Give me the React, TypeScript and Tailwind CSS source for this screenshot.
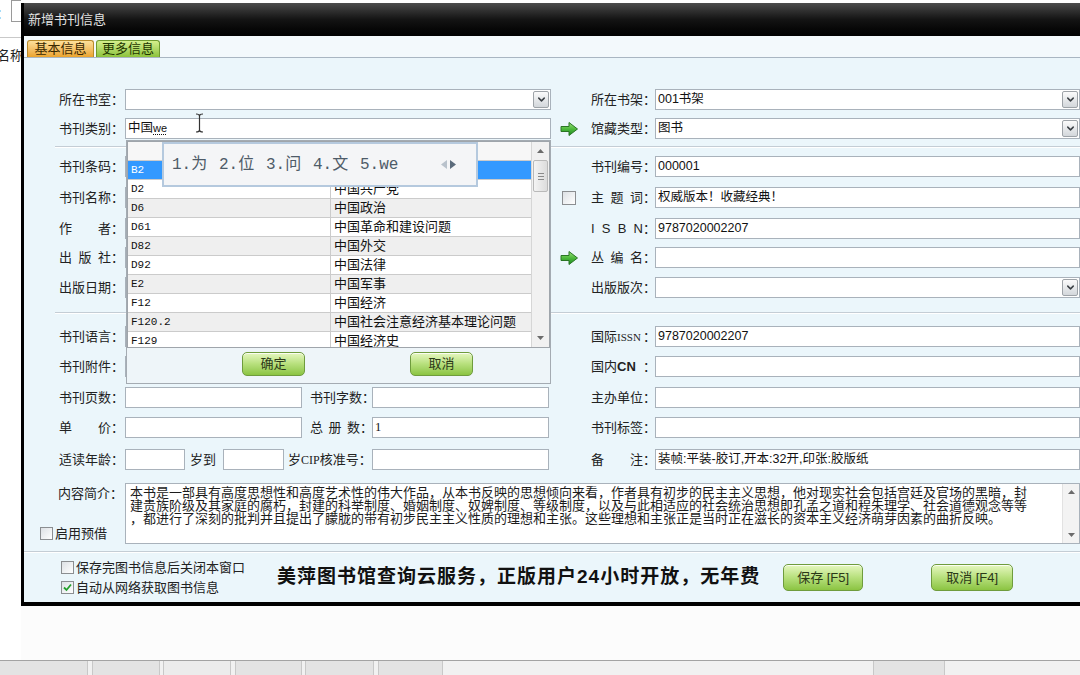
import type { ReactNode } from "react";
import { ChevronDown } from "lucide-react";

const listRows = [
    ["B2", "中国哲学"],
    ["D2", "中国共产党"],
    ["D6", "中国政治"],
    ["D61", "中国革命和建设问题"],
    ["D82", "中国外交"],
    ["D92", "中国法律"],
    ["E2", "中国军事"],
    ["F12", "中国经济"],
    ["F120.2", "中国社会注意经济基本理论问题"],
    ["F129", "中国经济史"],
];

const imeWords = ["1.为", "2.位", "3.问", "4.文", "5.we"];

const summary = [
    "本书是一部具有高度思想性和高度艺术性的伟大作品，从本书反映的思想倾向来看，作者具有初步的民主主义思想，他对现实社会包括宫廷及官场的黑暗，封",
    "建贵族阶级及其家庭的腐朽，封建的科举制度、婚姻制度、奴婢制度、等级制度，以及与此相适应的社会统治思想即孔孟之道和程朱理学、社会道德观念等等",
    "，都进行了深刻的批判并且提出了朦胧的带有初步民主主义性质的理想和主张。这些理想和主张正是当时正在滋长的资本主义经济萌芽因素的曲折反映。",
];

const TriUp = () => (
    <svg width="7" height="4" viewBox="0 0 7 4">
        <path d="M0 4 L3.5 0 L7 4 Z" fill="#6b6b6b" />
    </svg>
);

const TriDown = () => (
    <svg width="7" height="4" viewBox="0 0 7 4">
        <path d="M0 0 L3.5 4 L7 0 Z" fill="#6b6b6b" />
    </svg>
);

const DropButton = () => (
    <div className="mr-[1px] flex h-[17px] w-[16px] shrink-0 items-center justify-center rounded-[2px] border border-[#9ea3a8] bg-linear-to-b from-[#fbfbfb] to-[#d3d7db]">
        <ChevronDown size={11} strokeWidth={3.2} className="text-[#3a3f44]" />
    </div>
);

const GreenArrow = () => (
    <svg width="19" height="16" viewBox="0 0 19 16">
        <defs>
            <linearGradient id="greenArrow" x1="0" y1="0" x2="0" y2="1">
                <stop offset="0" stopColor="#9be07a" />
                <stop offset="0.5" stopColor="#4db93b" />
                <stop offset="1" stopColor="#1d8a22" />
            </linearGradient>
        </defs>
        <path
            d="M1 5.5 H9 V1.5 L17.5 8 L9 14.5 V10.5 H1 Z"
            fill="url(#greenArrow)"
            stroke="#2a7524"
            strokeWidth="1"
            strokeLinejoin="round"
        />
    </svg>
);

const CheckBox = ({ checked, size = "small" }: { checked?: boolean; size?: "small" | "big" }) => (
    <span
        className={
            size === "big"
                ? "flex h-[14px] w-[14px] shrink-0 items-center justify-center border border-[#8b8e91] bg-linear-to-br from-[#dde1e5] to-white"
                : "flex h-[13px] w-[13px] shrink-0 items-center justify-center border border-[#8b8e91] bg-linear-to-br from-[#dde1e5] to-white"
        }
    >
        {checked && (
            <svg width="9" height="9" viewBox="0 0 9 9">
                <path d="M1 4.5 L3.5 7 L8 1.5" fill="none" stroke="#23a02d" strokeWidth="1.8" />
            </svg>
        )}
    </span>
);

type LabelProps = {
    text?: string;
    side?: "left" | "right" | "mid";
    children?: ReactNode;
};

const Label = ({ text, side = "left", children }: LabelProps) => {
    const parts = text ? text.split(" ") : [];
    const box =
        side === "left"
            ? "flex w-[68px] shrink-0 items-center pl-[4px]"
            : side === "right"
              ? "flex w-[75px] shrink-0 items-center pl-[11px]"
              : "flex w-[62px] shrink-0 items-center";
    return (
        <div className={box}>
            <div
                className={
                    parts.length > 1
                        ? "flex w-[52px] justify-between"
                        : "w-[52px] whitespace-nowrap"
                }
            >
                {children ?? parts.map((p, i) => <span key={i}>{p}</span>)}
            </div>
            <span className="w-[12px]">：</span>
        </div>
    );
};

type FieldProps = {
    value?: ReactNode;
    drop?: boolean;
    className?: string;
    overlay?: ReactNode;
};

const Field = ({ value, drop, className = "min-w-0 flex-1", overlay }: FieldProps) => (
    <div className={`relative flex h-[21px] items-center border border-[#a9b2bb] bg-white ${className}`}>
        <div className="min-w-0 flex-1 overflow-hidden whitespace-nowrap pl-[2px] text-[12.5px] text-[#111]">
            {value}
        </div>
        {drop && <DropButton />}
        {overlay}
    </div>
);

type RowProps = {
    left?: ReactNode;
    icon?: ReactNode;
    right?: ReactNode;
    className?: string;
};

const Row = ({ left, icon, right, className }: RowProps) => (
    <div className={`flex h-[21px] items-center ${className}`}>
        <div className="flex w-[496px] shrink-0 items-center">{left}</div>
        <div className="ml-[7px] flex w-[22px] shrink-0 items-center justify-center">{icon}</div>
        {right}
    </div>
);

const GreenButton = ({ children, className }: { children: ReactNode; className: string }) => (
    <div
        className={`flex shrink-0 items-center justify-center rounded-[5px] border border-[#6f9c3d] bg-linear-to-b from-[#e6f7bf] via-[#b7e07c] to-[#8bc441] text-[13px] text-[#2b3818] shadow-[inset_0_1px_0_rgba(255,255,255,0.8)] ${className}`}
    >
        {children}
    </div>
);

const Separator = () => (
    <div className="h-[2px] border-t border-b border-t-[#c4cdd5] border-b-white" />
);

const ListScrollBar = () => (
    <div className="flex w-[18px] shrink-0 flex-col border-l border-[#d6d6d6] bg-[#f1f1f1]">
        <div className="flex h-[18px] items-center justify-center">
            <TriUp />
        </div>
        <div className="mx-[1px] flex h-[32px] flex-col items-center justify-center gap-[2px] rounded-[2px] border border-[#b9b9b9] bg-linear-to-r from-[#f4f4f4] to-[#dcdcdc]">
            <span className="h-px w-[6px] bg-[#8a8a8a]" />
            <span className="h-px w-[6px] bg-[#8a8a8a]" />
            <span className="h-px w-[6px] bg-[#8a8a8a]" />
        </div>
        <div className="flex-1" />
        <div className="flex h-[18px] items-center justify-center">
            <TriDown />
        </div>
    </div>
);

const CategoryPanel = () => (
    <div className="absolute left-0 top-[21px] z-10 h-[244px] w-[425px] border border-[#a4abb2] bg-[#eef5f9]">
        <div className="flex h-[207px] border border-[#9fa5ab] bg-white">
            <div className="min-w-0 flex-1 overflow-hidden">
                <div className="h-[19px] border-b border-[#cbcbcb] bg-[#f7f7f7]" />
                {listRows.map(([code, name], i) => (
                    <div
                        key={code}
                        className={
                            i === 0
                                ? "flex h-[19px] items-center border-b border-[#cbcbcb] bg-[#3399ff] text-white"
                                : i % 2 === 0
                                  ? "flex h-[19px] items-center border-b border-[#cbcbcb] bg-[#efefef] text-[#111]"
                                  : "flex h-[19px] items-center border-b border-[#cbcbcb] bg-white text-[#111]"
                        }
                    >
                        <div className="flex h-full w-[203px] shrink-0 items-center border-r border-[#cbcbcb] pl-[3px] font-['Liberation_Mono',monospace] text-[11px]">
                            {code}
                        </div>
                        <div className="whitespace-nowrap pl-[3px] text-[13px]">{name}</div>
                    </div>
                ))}
            </div>
            <ListScrollBar />
        </div>
        <div className="mt-[4px] flex pl-[115px]">
            <GreenButton className="h-[24px] w-[63px]">确定</GreenButton>
            <GreenButton className="ml-[105px] h-[24px] w-[63px]">取消</GreenButton>
        </div>
    </div>
);

const ImePopup = () => (
    <div className="absolute left-[36px] top-[23px] z-20 flex h-[45px] w-[316px] items-center border-2 border-[#b5c9de] bg-[#f4f5f7] pl-[8px] font-['Liberation_Mono','Noto_Sans_CJK_SC',monospace] text-[16px] text-[#4e5b68]">
        <div className="flex gap-[12px]">
            {imeWords.map((w) => (
                <span key={w} className="w-[35px] whitespace-nowrap">
                    {w}
                </span>
            ))}
        </div>
        <div className="ml-[46px] flex items-center gap-[3px]">
            <svg width="6" height="9" viewBox="0 0 6 9">
                <path d="M6 0 L0 4.5 L6 9 Z" fill="#b9c2cc" />
            </svg>
            <svg width="6" height="9" viewBox="0 0 6 9">
                <path d="M0 0 L6 4.5 L0 9 Z" fill="#5b6b7b" />
            </svg>
        </div>
    </div>
);

const TextCursor = () => (
    <svg className="absolute left-[69px] top-[-6px] z-30" width="9" height="20" viewBox="0 0 9 20">
        <path
            d="M1 1 Q4.5 1 4.5 3 Q4.5 1 8 1 M4.5 3 V17 M1 19 Q4.5 19 4.5 17 Q4.5 19 8 19"
            fill="none"
            stroke="#333"
            strokeWidth="1.2"
        />
    </svg>
);

const BehindWindow = () => (
    <div className="w-[21px] shrink-0 overflow-hidden bg-white text-[13px] text-[#222]">
        <div className="flex h-[24px] items-start">
            <span className="mt-[4px] -ml-[4px]">：</span>
            <div className="ml-[2px] h-[22px] w-[20px] shrink-0 border border-[#9a9a9a] bg-white" />
        </div>
        <div className="mt-[13px] border-t border-[#c9c9c9]" />
        <div className="mt-[8px] -ml-[3px] whitespace-nowrap">名称</div>
    </div>
);

const Taskbar = () => (
    <div className="flex h-[15px] border-t border-[#a3a3a3] bg-[#f1f1f1]">
        <div className="w-[88px] border-r border-[#c8c8c8] bg-[#e3e3e3]" />
        <div className="ml-[4px] w-[68px] border-x border-[#c8c8c8] bg-[#e3e3e3]" />
        <div className="ml-[3px] w-[68px] border-x border-[#c8c8c8] bg-[#ececec]" />
        <div className="ml-[4px] w-[67px] border-x border-[#c8c8c8] bg-[#e3e3e3]" />
        <div className="ml-[3px] w-[69px] border-x border-[#c8c8c8] bg-[#e3e3e3]" />
        <div className="ml-[4px] w-[65px] border-x border-[#c8c8c8] bg-[#e3e3e3]" />
        <div className="ml-[430px] w-[72px] border-x border-[#c8c8c8] bg-[#e3e3e3]" />
    </div>
);

const Dialog = () => (
    <div className="mt-[3px] flex h-[603px] w-[1062px] shrink-0 flex-col border-b-[4px] border-l-[3px] border-black bg-black">
        <div className="flex h-[33px] items-center bg-linear-to-b from-[#4b4b4b] via-[#141414] to-[#020202] pl-[4px] text-[13px] text-[#e2e2e2]">
            新增书刊信息
        </div>
        <div className="flex flex-1 flex-col bg-[#ebf6fb]">
            <div className="flex h-[22px] items-end gap-[2px] border-b border-[#a9b6c2] bg-[#f3f9fc] pl-[3px]">
                <div className="flex h-[17px] w-[67px] items-center justify-center rounded-t-[3px] border border-b-0 border-[#b98a2a] bg-linear-to-b from-[#fde09a] to-[#eba42a] text-[13px] text-[#3a2800]">
                    基本信息
                </div>
                <div className="flex h-[17px] w-[64px] items-center justify-center rounded-t-[3px] border border-b-0 border-[#6f9a2f] bg-linear-to-b from-[#d4ef8c] to-[#8cc23a] text-[13px] text-[#1f3600]">
                    更多信息
                </div>
            </div>

            <div className="flex flex-col pl-[31px] pr-[3px] pt-[31px] text-[13px] text-[#222]">
                <Row
                    left={
                        <>
                            <Label text="所在书室" />
                            <Field drop className="ml-[2px] w-[426px]" />
                        </>
                    }
                    right={
                        <>
                            <Label text="所在书架" side="right" />
                            <Field value="001书架" drop />
                        </>
                    }
                />
                <Row
                    className="relative z-10 mt-[8px]"
                    left={
                        <>
                            <Label text="书刊类别" />
                            <Field
                                className="ml-[2px] w-[426px]"
                                value={
                                    <>
                                        中国
                                        <span className="text-[11px] underline decoration-dotted underline-offset-2">
                                            we
                                        </span>
                                    </>
                                }
                                overlay={
                                    <>
                                        <TextCursor />
                                        <CategoryPanel />
                                        <ImePopup />
                                    </>
                                }
                            />
                        </>
                    }
                    icon={<GreenArrow />}
                    right={
                        <>
                            <Label text="馆藏类型" side="right" />
                            <Field value="图书" drop />
                        </>
                    }
                />
                <div className="mt-[7px]">
                    <Separator />
                </div>

                <Row
                    className="mt-[8px]"
                    left={
                        <>
                            <Label text="书刊条码" />
                            <Field className="ml-[2px] w-[426px]" />
                        </>
                    }
                    right={
                        <>
                            <Label text="书刊编号" side="right" />
                            <Field value="000001" />
                        </>
                    }
                />
                <Row
                    className="mt-[10px]"
                    left={
                        <>
                            <Label text="书刊名称" />
                            <Field className="ml-[2px] w-[426px]" />
                        </>
                    }
                    icon={<CheckBox size="big" />}
                    right={
                        <>
                            <Label text="主 题 词" side="right" />
                            <Field value="权威版本！收藏经典！" />
                        </>
                    }
                />
                <Row
                    className="mt-[10px]"
                    left={
                        <>
                            <Label text="作 者" />
                            <Field className="ml-[2px] w-[426px]" />
                        </>
                    }
                    right={
                        <>
                            <Label text="I S B N" side="right" />
                            <Field value="9787020002207" />
                        </>
                    }
                />
                <Row
                    className="mt-[8px]"
                    left={
                        <>
                            <Label text="出 版 社" />
                            <Field className="ml-[2px] w-[426px]" />
                        </>
                    }
                    icon={<GreenArrow />}
                    right={
                        <>
                            <Label text="丛 编 名" side="right" />
                            <Field />
                        </>
                    }
                />
                <Row
                    className="mt-[9px]"
                    left={
                        <>
                            <Label text="出版日期" />
                            <Field className="ml-[2px] w-[426px]" />
                        </>
                    }
                    right={
                        <>
                            <Label text="出版版次" side="right" />
                            <Field drop />
                        </>
                    }
                />
                <div className="mt-[14px]">
                    <Separator />
                </div>

                <Row
                    className="mt-[12px]"
                    left={
                        <>
                            <Label text="书刊语言" />
                            <Field className="ml-[2px] w-[426px]" />
                        </>
                    }
                    right={
                        <>
                            <Label side="right">
                                国际
                                <span className="font-['Liberation_Serif',serif] text-[11px]">ISSN</span>
                            </Label>
                            <Field value="9787020002207" />
                        </>
                    }
                />
                <Row
                    className="mt-[9px]"
                    left={
                        <>
                            <Label text="书刊附件" />
                            <Field className="ml-[2px] w-[426px]" />
                        </>
                    }
                    right={
                        <>
                            <Label side="right">
                                国内<b className="text-[13px]">CN</b>
                            </Label>
                            <Field />
                        </>
                    }
                />
                <Row
                    className="mt-[10px]"
                    left={
                        <>
                            <Label text="书刊页数" />
                            <Field className="ml-[2px] w-[177px]" />
                            <div className="ml-[8px]">
                                <Label text="书刊字数" side="mid" />
                            </div>
                            <Field className="w-[177px]" />
                        </>
                    }
                    right={
                        <>
                            <Label text="主办单位" side="right" />
                            <Field />
                        </>
                    }
                />
                <Row
                    className="mt-[9px]"
                    left={
                        <>
                            <Label text="单 价" />
                            <Field className="ml-[2px] w-[177px]" />
                            <div className="ml-[8px]">
                                <Label text="总 册 数" side="mid" />
                            </div>
                            <Field
                                className="w-[177px]"
                                value={<span className="font-['Liberation_Serif',serif]">1</span>}
                            />
                        </>
                    }
                    right={
                        <>
                            <Label text="书刊标签" side="right" />
                            <Field />
                        </>
                    }
                />
                <Row
                    className="mt-[11px]"
                    left={
                        <>
                            <Label text="适读年龄" />
                            <Field className="ml-[2px] w-[60px]" />
                            <span className="ml-[5px] w-[33px] shrink-0">岁到</span>
                            <Field className="w-[61px]" />
                            <span className="ml-[4px] w-[84px] shrink-0 whitespace-nowrap">
                                岁<span className="font-['Liberation_Serif',serif] text-[12px]">CIP</span>
                                核准号：
                            </span>
                            <Field className="w-[177px]" />
                        </>
                    }
                    right={
                        <>
                            <Label text="备 注" side="right" />
                            <Field value="装帧:平装-胶订,开本:32开,印张:胶版纸" />
                        </>
                    }
                />

                <div className="mt-[13px] flex h-[61px]">
                    <div className="-ml-[16px] flex w-[84px] shrink-0 flex-col justify-between">
                        <div className="flex h-[21px] items-center justify-end">内容简介：</div>
                        <div className="flex h-[21px] items-center pl-[1px]">
                            <CheckBox />
                            <span className="ml-[2px]">启用预借</span>
                        </div>
                    </div>
                    <div className="ml-[2px] flex min-w-0 flex-1 border border-[#a9b2bb] bg-white">
                        <div className="min-w-0 flex-1 overflow-hidden whitespace-nowrap pl-[4px] pt-[2px] text-[13px] leading-[13px] text-[#1b1b1b]">
                            {summary.map((line) => (
                                <div key={line}>{line}</div>
                            ))}
                        </div>
                        <div className="flex w-[17px] shrink-0 flex-col items-center justify-between border-l border-[#e2e2e2] bg-[#f3f3f3] py-[6px]">
                            <TriUp />
                            <TriDown />
                        </div>
                    </div>
                </div>
            </div>

            <div className="mt-[7px]">
                <Separator />
            </div>

            <div className="flex flex-1 items-center pl-[37px] text-[13px] text-[#222]">
                <div className="flex w-[216px] shrink-0 flex-col">
                    <div className="flex h-[20px] items-center gap-[2px]">
                        <CheckBox />
                        保存完图书信息后关闭本窗口
                    </div>
                    <div className="flex h-[20px] items-center gap-[2px]">
                        <CheckBox checked />
                        自动从网络获取图书信息
                    </div>
                </div>
                <div className="whitespace-nowrap text-[19px] font-bold tracking-[1px] text-[#111]">
                    美萍图书馆查询云服务，正版用户24小时开放，无年费
                </div>
                <GreenButton className="ml-[23px] h-[27px] w-[80px]">保存 [F5]</GreenButton>
                <GreenButton className="ml-[68px] h-[27px] w-[82px]">取消 [F4]</GreenButton>
            </div>
        </div>
    </div>
);

const App = () => {
    return (
        <div className="flex h-[675px] w-[1080px] flex-col overflow-hidden bg-[#fcfcfc] font-['Liberation_Sans','Noto_Sans_CJK_SC',sans-serif]">
            <div className="flex h-[660px] shrink-0">
                <BehindWindow />
                <Dialog />
            </div>
            <Taskbar />
        </div>
    );
};

export default App;
